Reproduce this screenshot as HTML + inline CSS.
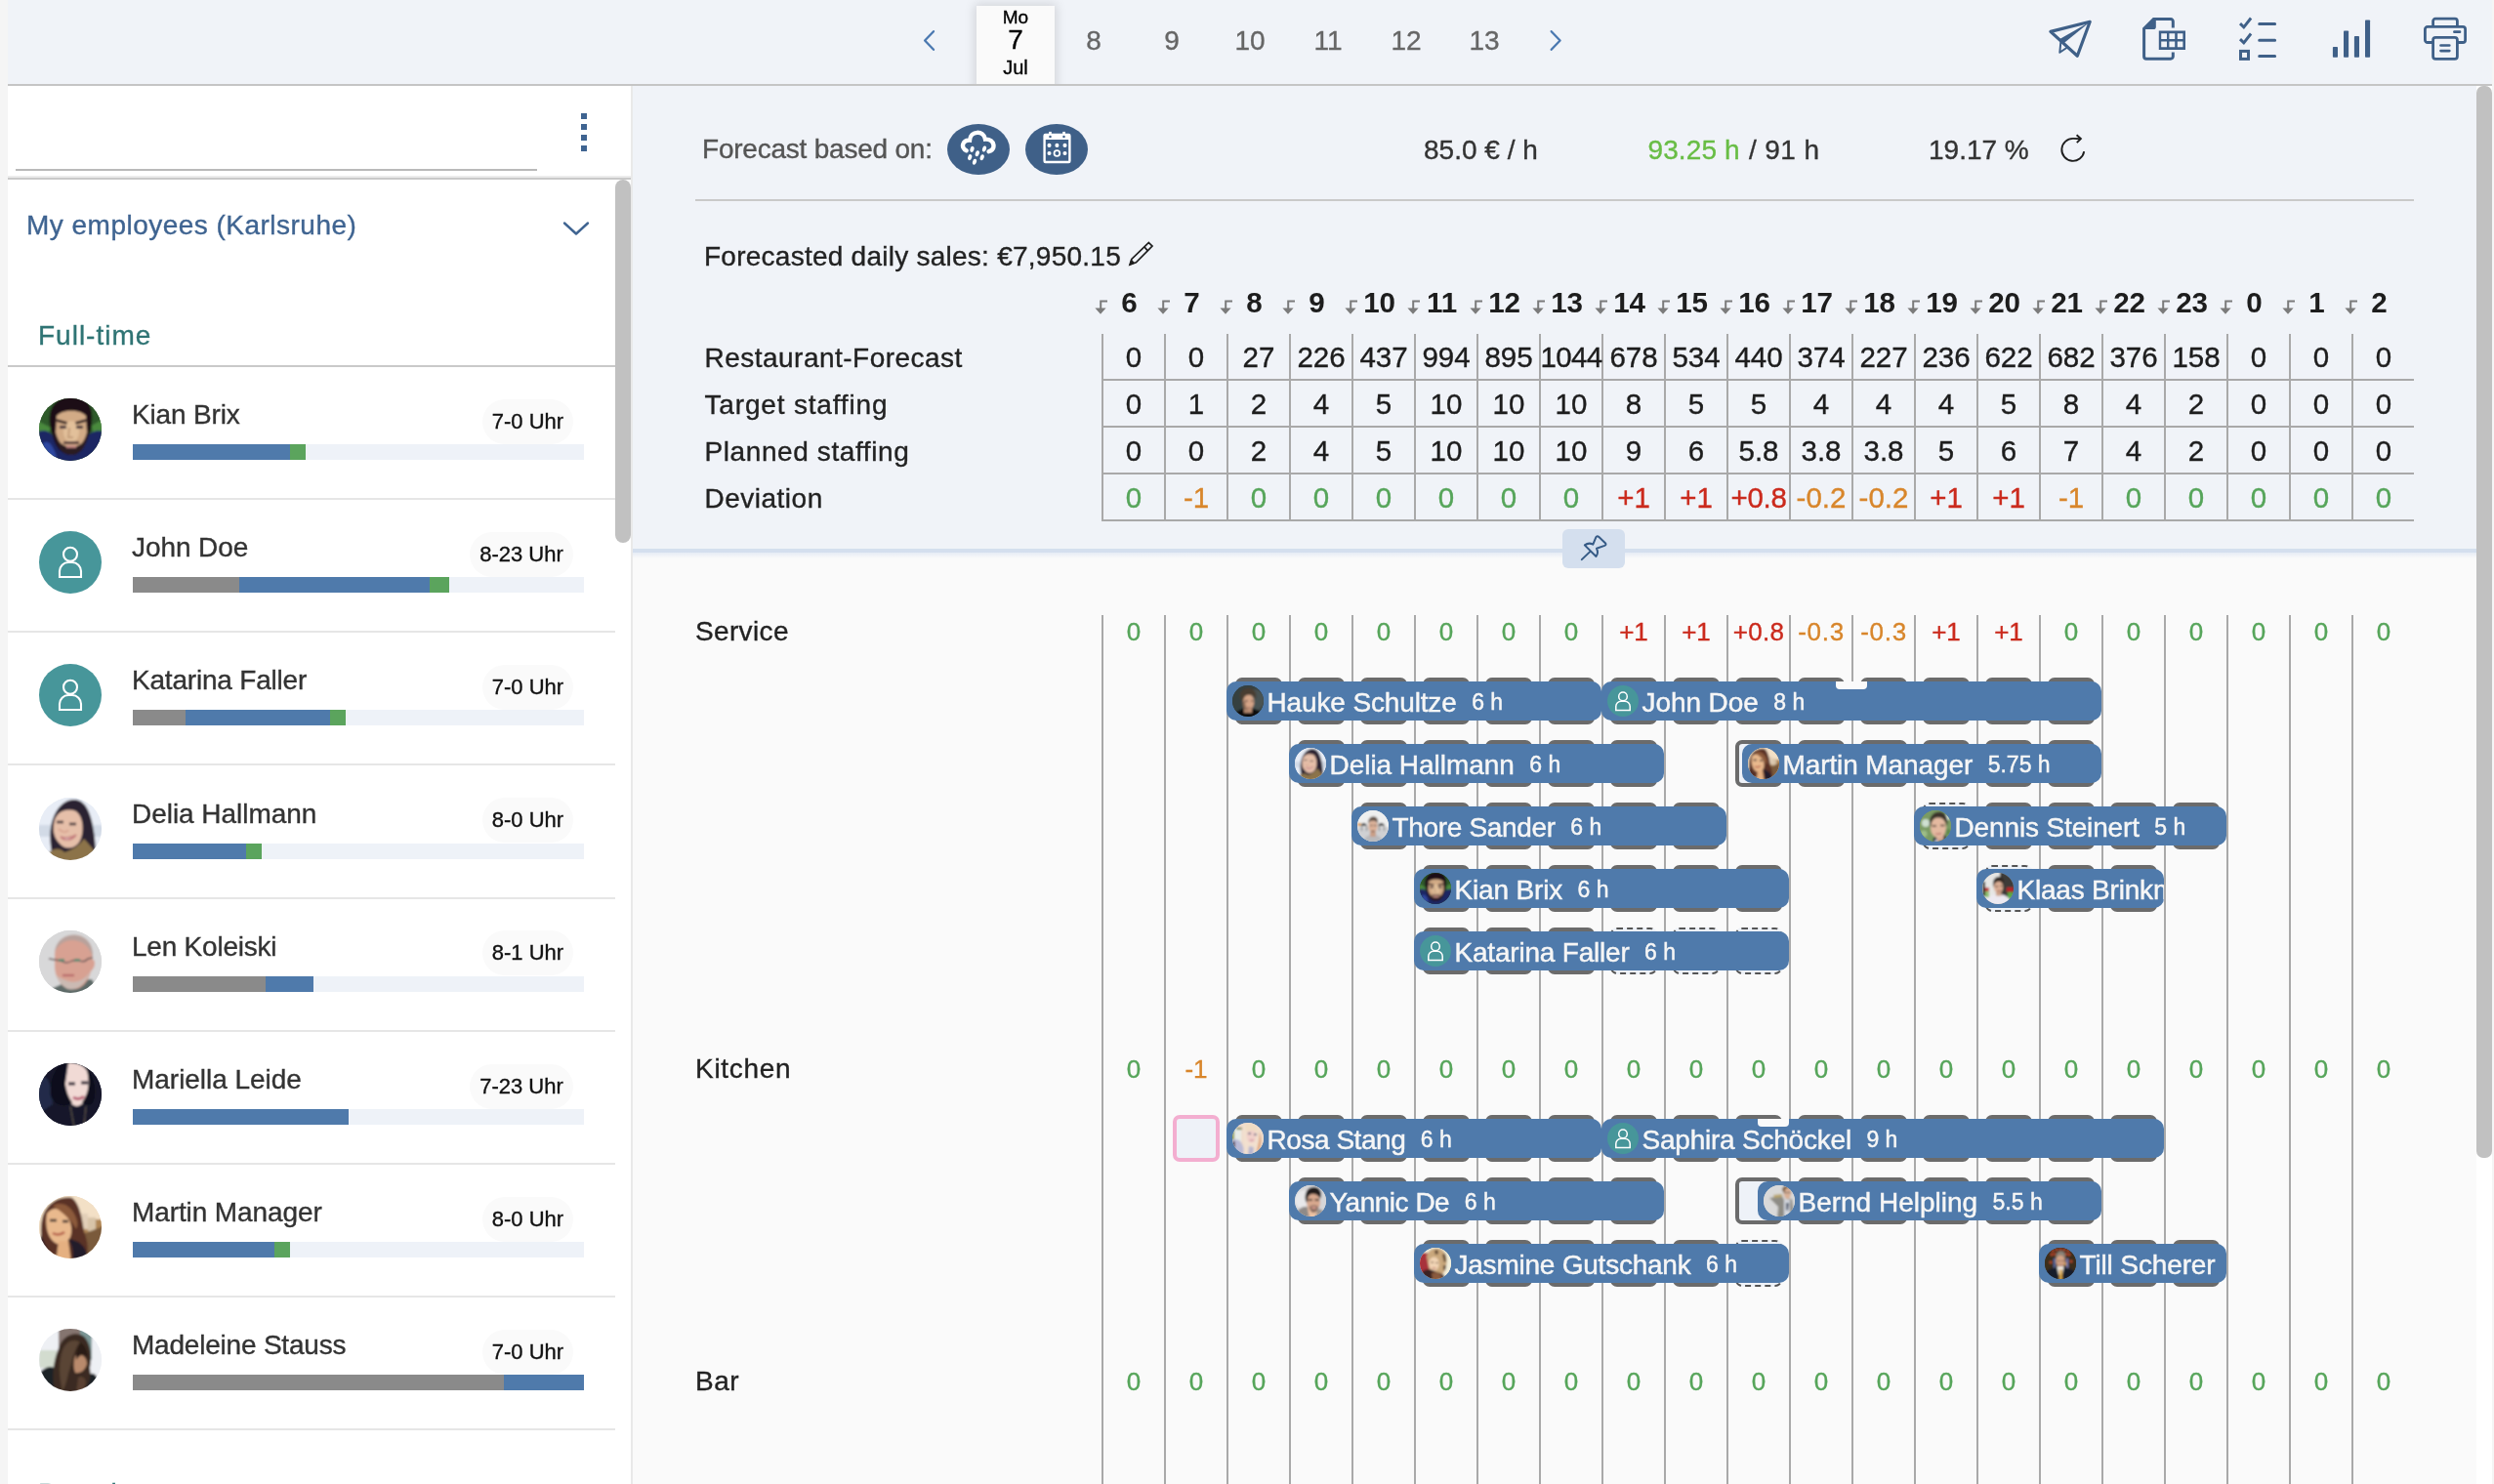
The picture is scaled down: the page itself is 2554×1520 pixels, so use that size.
<!DOCTYPE html><html><head><meta charset="utf-8"><title>Shift planning</title><style>
*{box-sizing:border-box;margin:0;padding:0}
html,body{width:2554px;height:1520px;overflow:hidden;background:#f5f5f5;font-family:"Liberation Sans", sans-serif;}
body{position:relative;-webkit-text-stroke:0.35px}
#wrap{position:absolute;left:0;top:0;width:2554px;height:1520px;will-change:transform}
.abs{position:absolute}
.t{position:absolute;white-space:nowrap;line-height:1}
#top{position:absolute;left:8px;top:0;width:2544px;height:88px;background:#f0f3f8;border-bottom:2px solid #c5c5c5}
#left{position:absolute;left:8px;top:88px;width:640px;height:1432px;background:#fff;border-right:2px solid #e9e9e9;overflow:hidden}
#right{position:absolute;left:648px;top:88px;width:1904px;height:1432px;background:#fafafa;overflow:hidden}
#rhead{position:absolute;left:0;top:0;width:1904px;height:478px;background:#f0f3f8;border-bottom:4px solid #d4dfee}
.day{position:absolute;top:28px;width:80px;text-align:center;font-size:28px;line-height:28px;color:#666}
.sep{position:absolute;left:0;width:622px;height:2px;background:#e6e6e6}
.name{position:absolute;left:127px;font-size:28px;line-height:28px;color:#333;white-space:nowrap}
.badge{position:absolute;height:46px;border-radius:23px;background:#fafafa;font-size:22px;line-height:46px;color:#111;text-align:center;white-space:nowrap}
.pbar{position:absolute;left:128px;width:462px;height:16px;background:#eef2f8;display:flex}
.pbar i{display:block;height:16px}
.av{position:absolute;border-radius:50%;overflow:hidden}
.vl{position:absolute;width:2px;background:#a9a9a9}
.hl{position:absolute;height:2px;background:#a9a9a9}
.cell{position:absolute;width:64px;text-align:center;white-space:nowrap;line-height:1}
.slot{position:absolute;width:47.6px;height:48px;border:4px solid #6b6b6b;border-radius:7px;background:#eef2f8}
.slot.d{border:2px dashed #555;}
.slot.p{border:4px solid #f3aed0;border-radius:7px}
.bar{position:absolute;height:40px;border-radius:10px;background:#4f7aab;overflow:hidden;white-space:nowrap;color:#f6f6f6}
.bar .nm{position:absolute;left:41.5px;top:6.5px;font-size:28px;line-height:30px;-webkit-text-stroke:0.45px}
.bar .nm span{font-size:23px;margin-left:15.5px;letter-spacing:0;position:relative;top:-1.7px}
.notch{position:absolute;width:32px;height:8px;background:#fafafa;border-radius:0 0 4px 4px}
.lbl{position:absolute;left:64px;font-size:28px;line-height:28px;color:#222;white-space:nowrap}
</style></head><body><div id="wrap"><svg width="0" height="0" style="position:absolute"><defs><filter id="bl" x="-20%" y="-20%" width="140%" height="140%"><feGaussianBlur stdDeviation="1.5"/></filter><filter id="bl2" x="-20%" y="-20%" width="140%" height="140%"><feGaussianBlur stdDeviation="0.9"/></filter><filter id="bl3" x="-20%" y="-20%" width="140%" height="140%"><feGaussianBlur stdDeviation="2.2"/></filter></defs></svg>
<div id="top">
<svg class="abs" style="left:934px;top:28px" width="20" height="28" viewBox="0 0 20 28"><path d="M14 4.2 L5.1 13.5 L14 22.8" fill="none" stroke="#4a78b0" stroke-width="2.3" stroke-linecap="round" stroke-linejoin="round"/></svg>
<svg class="abs" style="left:1576px;top:28px" width="20" height="28" viewBox="0 0 20 28"><path d="M4.7 4.2 L13.6 13.5 L4.7 22.8" fill="none" stroke="#4a78b0" stroke-width="2.3" stroke-linecap="round" stroke-linejoin="round"/></svg>
<div class="abs" style="left:940px;top:0;width:184px;height:86px;overflow:hidden"><div class="abs" style="left:52px;top:6px;width:80px;height:90px;background:#fafafa;box-shadow:0 0 10px 2px rgba(0,0,0,.13)"></div></div>
<div class="abs" style="left:992px;top:6px;width:80px;height:80px;background:#fafafa;color:#000;text-align:center"><div class="t" style="left:0;width:80px;top:1.6px;font-size:19px">Mo</div><div class="t" style="left:0;width:80px;top:21px;font-size:28px;line-height:28px">7</div><div class="t" style="left:0;width:80px;top:53px;font-size:20px">Jul</div></div>
<div class="day" style="left:1072px">8</div>
<div class="day" style="left:1152px">9</div>
<div class="day" style="left:1232px">10</div>
<div class="day" style="left:1312px">11</div>
<div class="day" style="left:1392px">12</div>
<div class="day" style="left:1472px">13</div>
<svg class="abs" style="left:2088px;top:18px" width="50" height="46" viewBox="0 0 50 46"><path d="M3.9 14.4 L44.2 4.3 L31.3 39.3 Z" fill="none" stroke="#3f6088" stroke-width="3.2" stroke-linejoin="round"/><path d="M44.5 4.3 L13.3 21.9 L17.8 26 Z" fill="#3f6088"/><path d="M14.3 25.5 L13.3 35.8 L20.3 31" fill="none" stroke="#3f6088" stroke-width="2" stroke-linejoin="round" stroke-linecap="round"/></svg>
<svg class="abs" style="left:2184px;top:16px" width="50" height="48" viewBox="0 0 50 48"><path d="M33.3 12.6 V6 a2.4 2.4 0 0 0 -2.4 -2.4 H13.5 L3.6 13.4 V41.8 a2.4 2.4 0 0 0 2.4 2.4 H30.9 a2.4 2.4 0 0 0 2.4 -2.4 V37.6" fill="none" stroke="#3f6088" stroke-width="3"/><path d="M2.6 13 L13 2.4 H15.8 V11.4 a2.6 2.6 0 0 1 -2.6 2.6 H2.6 Z" fill="#3f6088"/><path d="M18.8 15.5 H46 V35 H18.8 Z M21.2 18.2 V24 H27 V18.2 Z M29.4 18.2 V24 H35.2 V18.2 Z M37.8 18.2 V24 H43.4 V18.2 Z M21.2 26.6 V32.2 H27 V26.6 Z M29.4 26.6 V32.2 H35.2 V26.6 Z M37.8 26.6 V32.2 H43.4 V26.6 Z" fill="#3f6088" fill-rule="evenodd"/></svg>
<svg class="abs" style="left:2282px;top:16px" width="44" height="48" viewBox="0 0 44 48"><path d="M4 8.1 L7.8 11.8 L15.1 2.5 M4 24.1 L7.8 27.8 L15.1 18.5" fill="none" stroke="#3f6088" stroke-width="2.9"/><path d="M23.7 8.5 H39.6 M23.7 25.2 H39.6 M23.7 41.5 H39.6" fill="none" stroke="#3f6088" stroke-width="3" stroke-linecap="round"/><rect x="4.5" y="36.4" width="8" height="8" fill="none" stroke="#3f6088" stroke-width="3"/></svg>
<svg class="abs" style="left:2378px;top:18px" width="44" height="44" viewBox="0 0 44 44"><rect x="2.9" y="30" width="5.1" height="10.8" rx="0.8" fill="#3f6088"/><rect x="14" y="13.5" width="5.1" height="27.3" rx="0.8" fill="#3f6088"/><rect x="24.9" y="19.1" width="5.1" height="21.7" rx="0.8" fill="#3f6088"/><rect x="36" y="2.4" width="5.1" height="38.4" rx="0.8" fill="#3f6088"/></svg>
<svg class="abs" style="left:2472px;top:16px" width="48" height="48" viewBox="0 0 48 48"><path d="M11.6 11 V5.6 a2.4 2.4 0 0 1 2.4 -2.4 H34 a2.4 2.4 0 0 1 2.4 2.4 V11" fill="none" stroke="#3f6088" stroke-width="2.8"/><path d="M11 27.5 H6 a2.6 2.6 0 0 1 -2.6 -2.6 V14 a2.6 2.6 0 0 1 2.6 -2.6 H42 a2.6 2.6 0 0 1 2.6 2.6 V24.9 a2.6 2.6 0 0 1 -2.6 2.6 H37" fill="none" stroke="#3f6088" stroke-width="2.8"/><rect x="11.6" y="22.4" width="24.8" height="22" rx="2.6" fill="none" stroke="#3f6088" stroke-width="2.8"/><path d="M33.4 16.7 H39 M19.5 30.5 H28.3 M19.5 36.1 H28.3" fill="none" stroke="#3f6088" stroke-width="2.7" stroke-linecap="round"/></svg>
</div>
<div id="left">
<div class="abs" style="left:8px;top:85px;width:534px;height:2px;background:#b9b9b9"></div>
<div class="abs" style="left:587px;top:28px;width:6px;height:6px;background:#3f6491"></div>
<div class="abs" style="left:587px;top:39px;width:6px;height:6px;background:#3f6491"></div>
<div class="abs" style="left:587px;top:50px;width:6px;height:6px;background:#3f6491"></div>
<div class="abs" style="left:587px;top:61px;width:6px;height:6px;background:#3f6491"></div>
<div class="abs" style="left:0;top:92px;width:638px;height:2px;background:#ececec"></div>
<div class="abs" style="left:0;top:94px;width:638px;height:2px;background:#c9c9c9"></div>
<div class="abs" style="left:622px;top:96px;width:16px;height:372px;border-radius:8px;background:#c1c1c1"></div>
<div class="t" style="left:19px;top:129px;font-size:28px;line-height:28px;color:#3f6491;letter-spacing:0.48px">My employees (Karlsruhe)</div>
<svg class="abs" style="left:565px;top:136px" width="34" height="20" viewBox="0 0 34 20"><path d="M5 4.5 L17 15.5 L29 4.5" fill="none" stroke="#3f6491" stroke-width="2.4" stroke-linecap="round" stroke-linejoin="round"/></svg>
<div class="t" style="left:31px;top:242px;font-size:28px;line-height:28px;color:#2f7474;letter-spacing:1.0px">Full-time</div>
<div class="sep" style="top:286px;background:#c9c9c9"></div>
<div class="av" style="left:32px;top:320.0px;width:64px;height:64px"><svg viewBox="0 0 64 64" width="100%" height="100%" preserveAspectRatio="none"><rect width="64" height="64" fill="#2c5228"/><g filter="url(#bl2)"><rect x="-4" y="-4" width="72" height="72" fill="#2f5a2b"/><path d="M-4 22 L12 30 L8 40 L-4 38Z M68 20 L54 28 L56 40 L68 36Z" fill="#4a8a3e"/><path d="M-4 36 C6 30 12 34 16 42 L48 42 C52 34 58 32 68 34 V68 H-4Z" fill="#1d2763"/><path d="M4 46 C10 42 14 48 18 60 L6 64Z" fill="#2f47a0"/><path d="M12 32 C6 6 22 -2 33 -2 C48 -2 58 6 53 32 L50 40 C46 52 40 58 33 58 C25 58 18 52 15 42Z" fill="#1b0c15"/><path d="M18 18 C24 11 42 11 48 18 L49 35 C46 46 40 53 33 53 C26 53 20 46 17 35Z" fill="#d2ab86"/><ellipse cx="33" cy="34" rx="8" ry="11" fill="#e2c09a"/><path d="M15 34 C17 51 25 58 33 58 C41 58 49 51 51 34 C47 45 41 50 33 50 C25 50 19 45 15 34Z" fill="#2a1a22"/><path d="M18 22.5 L28.5 25.5 M48 22.5 L37.5 25.5" stroke="#1e0f18" stroke-width="2.8"/><path d="M21 29.5 h7 M38 29.5 h7" stroke="#3a2a38" stroke-width="3.2"/><path d="M31 30 L30 40 h5" stroke="#c29c7a" stroke-width="2" fill="none"/><path d="M25 45.5 H41" stroke="#3a222a" stroke-width="2.4"/><path d="M28 49.5 H38" stroke="#c88a86" stroke-width="2.4"/></g></svg></div>
<div class="name" style="top:323.0px;letter-spacing:-0.17px">Kian Brix</div>
<div class="badge" style="left:486px;top:320.6px;width:93px">7-0 Uhr</div>
<div class="pbar" style="top:367.0px"><i style="width:161px;background:#4f7aab"></i><i style="width:16px;background:#5ba45d"></i></div>
<div class="sep" style="top:422.0px"></div>
<div class="av" style="left:32px;top:456.2px;width:64px;height:64px"><svg viewBox="0 0 64 64" width="100%" height="100%"><rect width="64" height="64" fill="#47969a"/><circle cx="32" cy="23.7" r="7" fill="none" stroke="#fff" stroke-width="2.1"/><path d="M21 47 V41 a9 9 0 0 1 9 -9 h4 a9 9 0 0 1 9 9 V47 Z" fill="none" stroke="#fff" stroke-width="2.1"/></svg></div>
<div class="name" style="top:459.2px;letter-spacing:-0.08px">John Doe</div>
<div class="badge" style="left:473px;top:456.8px;width:106px">8-23 Uhr</div>
<div class="pbar" style="top:503.2px"><i style="width:109px;background:#8a8a8a"></i><i style="width:195px;background:#4f7aab"></i><i style="width:20px;background:#5ba45d"></i></div>
<div class="sep" style="top:558.2px"></div>
<div class="av" style="left:32px;top:592.4px;width:64px;height:64px"><svg viewBox="0 0 64 64" width="100%" height="100%"><rect width="64" height="64" fill="#47969a"/><circle cx="32" cy="23.7" r="7" fill="none" stroke="#fff" stroke-width="2.1"/><path d="M21 47 V41 a9 9 0 0 1 9 -9 h4 a9 9 0 0 1 9 9 V47 Z" fill="none" stroke="#fff" stroke-width="2.1"/></svg></div>
<div class="name" style="top:595.4px;letter-spacing:-0.2px">Katarina Faller</div>
<div class="badge" style="left:486px;top:593.0px;width:93px">7-0 Uhr</div>
<div class="pbar" style="top:639.4px"><i style="width:54px;background:#8a8a8a"></i><i style="width:148px;background:#4f7aab"></i><i style="width:16px;background:#5ba45d"></i></div>
<div class="sep" style="top:694.4px"></div>
<div class="av" style="left:32px;top:728.6px;width:64px;height:64px"><svg viewBox="0 0 64 64" width="100%" height="100%" preserveAspectRatio="none"><rect width="64" height="64" fill="#e9edf5"/><g filter="url(#bl2)"><rect x="-4" y="-4" width="72" height="72" fill="#e8edf6"/><path d="M-4 28 H68 V40 H-4Z" fill="#d2dae6"/><path d="M12 50 C8 20 22 2 36 2 C50 2 56 22 58 54 L50 64 H14Z" fill="#2a2232"/><path d="M15 28 C16 14 28 10 38 14 C46 20 46 36 42 44 C38 52 28 54 22 48 C16 42 14 36 15 28Z" fill="#e6bfa9"/><path d="M8 58 C16 50 22 52 26 56 C34 54 42 48 46 42 L60 58 L54 68 H8Z" fill="#8c7349"/><path d="M22 40 C26 45 34 44 38 38 C34 41 26 42 22 40Z" fill="#fff" stroke="#c47d7d" stroke-width="1.6"/><path d="M18 25 h7 M31 27 h7" stroke="#3a2a30" stroke-width="2.4"/><path d="M20 32 C24 36 28 36 30 33" stroke="#d9a692" stroke-width="2" fill="none"/></g></svg></div>
<div class="name" style="top:731.6px;letter-spacing:-0.04px">Delia Hallmann</div>
<div class="badge" style="left:486px;top:729.2px;width:93px">8-0 Uhr</div>
<div class="pbar" style="top:775.6px"><i style="width:116px;background:#4f7aab"></i><i style="width:16px;background:#5ba45d"></i></div>
<div class="sep" style="top:830.6px"></div>
<div class="av" style="left:32px;top:864.8px;width:64px;height:64px"><svg viewBox="0 0 64 64" width="100%" height="100%" preserveAspectRatio="none"><rect width="64" height="64" fill="#d7d7d8"/><g filter="url(#bl2)"><rect x="-4" y="-4" width="72" height="72" fill="#d8d8d9"/><path d="M12 60 L30 52 L54 50 L64 68 H8Z" fill="#5d6a68"/><path d="M16 26 C16 10 28 4 38 5 C50 6 56 18 55 30 C58 30 58 38 53 42 C50 54 42 62 32 60 C22 58 16 48 16 36Z" fill="#d8a192"/><path d="M16 22 C18 8 30 3 40 5 C50 7 56 16 55 28 C52 16 44 10 34 10 C26 10 20 14 16 22Z" fill="#b8a29c"/><path d="M18 46 C22 58 30 62 36 60 C44 58 50 50 52 42 C46 52 38 54 30 52 C24 50 20 48 18 46Z" fill="#cbbab3"/><path d="M10 29 L22 31 Q28 35 34 31 L40 30 Q46 34 50 29 L55 28" fill="none" stroke="#6a5a5a" stroke-width="1.5"/><path d="M20 30.5 h6 M36 30.5 h6" stroke="#4f8a72" stroke-width="2.6"/><path d="M24 46 h12" stroke="#b8686a" stroke-width="2.2"/></g></svg></div>
<div class="name" style="top:867.8px;letter-spacing:-0.22px">Len Koleiski</div>
<div class="badge" style="left:486px;top:865.4px;width:93px">8-1 Uhr</div>
<div class="pbar" style="top:911.8px"><i style="width:136px;background:#8a8a8a"></i><i style="width:49px;background:#4f7aab"></i></div>
<div class="sep" style="top:966.8px"></div>
<div class="av" style="left:32px;top:1001.0px;width:64px;height:64px"><svg viewBox="0 0 64 64" width="100%" height="100%" preserveAspectRatio="none"><rect width="64" height="64" fill="#15192b"/><g filter="url(#bl2)"><rect x="-4" y="-4" width="72" height="72" fill="#15182a"/><path d="M-4 18 C6 8 12 14 14 42 L-4 54Z" fill="#232c48"/><path d="M30 0 C44 -2 54 8 52 24 C50 38 44 44 38 44 C30 42 26 32 27 20Z" fill="#f1dad5"/><path d="M29 -2 C24 8 26 30 34 40 C28 46 16 44 12 34 C10 16 18 0 29 -2Z" fill="#0f101a"/><path d="M48 4 C58 14 60 34 54 42 C50 44 46 42 44 40 C52 30 52 16 48 4Z" fill="#0f101a"/><path d="M30 21 h7 M43 20 h7" stroke="#2a2230" stroke-width="2.8"/><path d="M35 35 Q41 38.5 46 34" stroke="#b85e74" stroke-width="3" fill="none"/><path d="M32 44 L36 66 M48 44 L46 64" stroke="#5a5248" stroke-width="1.2"/></g></svg></div>
<div class="name" style="top:1004.0px;letter-spacing:-0.03px">Mariella Leide</div>
<div class="badge" style="left:473px;top:1001.6px;width:106px">7-23 Uhr</div>
<div class="pbar" style="top:1048.0px"><i style="width:221px;background:#4f7aab"></i></div>
<div class="sep" style="top:1103.0px"></div>
<div class="av" style="left:32px;top:1137.2px;width:64px;height:64px"><svg viewBox="0 0 64 64" width="100%" height="100%" preserveAspectRatio="none"><rect width="64" height="64" fill="#efd9bc"/><g filter="url(#bl2)"><rect x="-4" y="-4" width="72" height="72" fill="#f3e0c6"/><rect x="38" y="24" width="30" height="44" fill="#b08655"/><rect x="40" y="18" width="10" height="16" fill="#e2cfb8"/><rect x="50" y="22" width="8" height="14" fill="#d8c4a8"/><path d="M42 40 L68 30 V68 H50Z" fill="#7a5a3a"/><path d="M4 20 C10 4 24 0 34 2 C42 8 44 24 46 36 C50 48 52 56 46 68 H8 C2 50 0 34 4 20Z" fill="#5a3326"/><path d="M8 18 C14 10 22 12 28 20 C34 28 34 36 32 42 C28 50 20 52 14 46 C8 40 6 28 8 18Z" fill="#e9b98d"/><path d="M20 46 L30 46 L33 68 H17Z" fill="#e5b081"/><path d="M14 10 C22 6 30 8 36 18 C40 26 40 30 38 34 C34 26 26 18 14 10Z" fill="#8c5a3a"/><path d="M2 40 C6 52 12 60 20 68 H4 C2 56 0 48 2 40Z" fill="#20182a"/><path d="M30 44 C34 50 36 58 34 68 H50 C50 54 44 46 30 44Z" fill="#241a2c"/><path d="M11 25 h7 M24 26 h6" stroke="#3a2a2a" stroke-width="2.6"/><path d="M14 38 Q20 41.5 26 37" stroke="#b5604a" stroke-width="2.6" fill="none"/></g></svg></div>
<div class="name" style="top:1140.2px;letter-spacing:-0.1px">Martin Manager</div>
<div class="badge" style="left:486px;top:1137.8px;width:93px">8-0 Uhr</div>
<div class="pbar" style="top:1184.2px"><i style="width:145px;background:#4f7aab"></i><i style="width:16px;background:#5ba45d"></i></div>
<div class="sep" style="top:1239.2px"></div>
<div class="av" style="left:32px;top:1273.4px;width:64px;height:64px"><svg viewBox="0 0 64 64" width="100%" height="100%" preserveAspectRatio="none"><rect width="64" height="64" fill="#eef0f3"/><g filter="url(#bl2)"><rect x="-4" y="-4" width="72" height="72" fill="#eef0f4"/><path d="M0 22 h18 v18 h-18Z" fill="#d3dccf"/><rect x="20" y="-4" width="32" height="44" fill="#85756f"/><rect x="42" y="0" width="12" height="32" fill="#7c9796"/><path d="M0 46 C8 36 16 38 20 44 L56 46 C62 50 62 58 56 68 H4Z" fill="#1c2428"/><path d="M20 20 C24 6 38 2 46 8 C54 16 54 30 52 40 C54 52 50 60 42 68 H18 C12 56 14 34 20 20Z" fill="#3a2a20"/><path d="M37 28 C42 24 49 28 49 36 C47 43 42 46 37 45 C35 40 35 33 37 28Z" fill="#b98a6c"/><path d="M24 22 C28 12 36 10 42 14 C36 20 34 34 30 46 C28 56 26 60 24 64 C20 48 20 34 24 22Z" fill="#5a4434"/><path d="M42 14 C48 18 50 24 50 30 C46 24 42 26 38 32 C38 24 40 18 42 14Z" fill="#2a1c16"/><path d="M40 50 C44 48 48 50 48 56 L44 66 H38Z" fill="#5a4030"/></g></svg></div>
<div class="name" style="top:1276.4px;letter-spacing:-0.21px">Madeleine Stauss</div>
<div class="badge" style="left:486px;top:1274.0px;width:93px">7-0 Uhr</div>
<div class="pbar" style="top:1320.4px"><i style="width:380px;background:#8a8a8a"></i><i style="width:82px;background:#4f7aab"></i></div>
<div class="sep" style="top:1375.4px"></div>
<div class="t" style="left:31px;top:1427.5px;font-size:28px;line-height:28px;color:#2f7474;letter-spacing:1.0px">Part-time</div>
</div>
<div id="right">
<div id="rhead"></div>
<div class="abs" style="left:0;top:478px;width:1904px;height:6px;background:linear-gradient(#e6ecf5,#fafafa)"></div>
<div class="abs" style="left:1888px;top:0;width:16px;height:1432px;background:#fff"></div>
<div class="abs" style="left:1888px;top:0;width:16px;height:1098px;border-radius:7px;background:#c1c1c1"></div>
<div class="t" style="left:71px;top:51px;font-size:28px;line-height:28px;color:#555;letter-spacing:-0.22px">Forecast based on:</div>
<svg class="abs" style="left:322px;top:39px" width="64" height="52" viewBox="0 0 64 52"><ellipse cx="32" cy="26" rx="32" ry="26" fill="#3f6088"/><path d="M19.6 27.3 C13.5 24.5 15.5 16.2 23 16.6 C23.8 6.6 37.2 6.2 39 15.6 C48.5 15 50.5 26.5 42.6 28.2" fill="none" stroke="#fff" stroke-width="4.4" stroke-linecap="round"/><ellipse cx="25.5" cy="25.9" rx="1.95" ry="3.1" fill="#fff" transform="rotate(17 25.5 25.9)"/><ellipse cx="38" cy="25.5" rx="1.95" ry="3.1" fill="#fff" transform="rotate(17 38 25.5)"/><ellipse cx="30.8" cy="30.2" rx="1.95" ry="3.1" fill="#fff" transform="rotate(17 30.8 30.2)"/><ellipse cx="23.2" cy="34.1" rx="1.95" ry="3.1" fill="#fff" transform="rotate(17 23.2 34.1)"/><ellipse cx="35.7" cy="34.3" rx="1.95" ry="3.1" fill="#fff" transform="rotate(17 35.7 34.3)"/><ellipse cx="28" cy="38.7" rx="1.95" ry="3.1" fill="#fff" transform="rotate(17 28 38.7)"/></svg>
<svg class="abs" style="left:402px;top:39px" width="64" height="52" viewBox="0 0 64 52"><ellipse cx="32" cy="26" rx="32" ry="26" fill="#3f6088"/><path d="M18.4 12 a2.2 2.2 0 0 1 2.2 -2.2 H44.4 a2.2 2.2 0 0 1 2.2 2.2 V38 a2.2 2.2 0 0 1 -2.2 2.2 H20.6 a2.2 2.2 0 0 1 -2.2 -2.2 Z M20.8 16.1 V37.7 H44.2 V16.1 Z" fill="#fff" fill-rule="evenodd"/><rect x="24.1" y="7.9" width="2.7" height="3" fill="#fff"/><rect x="38.2" y="7.9" width="2.7" height="3" fill="#fff"/><circle cx="25.5" cy="12.9" r="1.25" fill="#3f6088"/><circle cx="39.5" cy="12.9" r="1.25" fill="#3f6088"/><circle cx="24.5" cy="21.9" r="2.05" fill="#fff"/><circle cx="32.4" cy="21.9" r="2.05" fill="#fff"/><circle cx="40.5" cy="21.9" r="2.05" fill="#fff"/><circle cx="24.5" cy="30" r="2.05" fill="#fff"/><circle cx="40.5" cy="30" r="2.05" fill="#fff"/><circle cx="32.4" cy="30" r="2.9" fill="none" stroke="#fff" stroke-width="1.8"/></svg>
<div class="t" style="left:810px;top:52px;font-size:28px;line-height:28px;color:#333">85.0 € / h</div>
<div class="t" style="left:1039.5px;top:52px;font-size:28px;line-height:28px;color:#68bd45;letter-spacing:0.1px">93.25 h</div>
<div class="t" style="left:1143px;top:52px;font-size:28px;line-height:28px;color:#333;letter-spacing:0.4px">/ 91 h</div>
<div class="t" style="left:1327px;top:52px;font-size:28px;line-height:28px;color:#333">19.17 %</div>
<svg class="abs" style="left:1458px;top:46px" width="34" height="36" viewBox="0 0 34 36"><path d="M24.6 8.2 L17.2 7.9 A11.5 11.5 0 1 0 28.2 21.2" fill="none" stroke="#1e1e1e" stroke-width="1.9"/><path d="M20.6 4.3 L24.9 8.1 L20.8 12.2" fill="none" stroke="#1e1e1e" stroke-width="1.9"/></svg>
<div class="abs" style="left:64px;top:116px;width:1760px;height:2px;background:#c9c9c9"></div>
<div class="t" style="left:73px;top:161px;font-size:28px;line-height:28px;color:#222;letter-spacing:0.25px">Forecasted daily sales: €7,950.15</div>
<svg class="abs" style="left:506px;top:157px" width="30" height="30" viewBox="0 0 30 30"><path d="M22.4 3.5 L26 7.1 L9.4 23.8 L3 26.2 L4.8 20.4 Z" fill="none" stroke="#1e1e1e" stroke-width="1.7" stroke-linejoin="miter"/><path d="M17.8 7.8 L21.4 11.9" fill="none" stroke="#1e1e1e" stroke-width="1.7"/><path d="M2.4 26.9 L4.4 20.6 L8.4 24.6 Z" fill="#1e1e1e"/></svg>
<svg class="abs" style="left:473px;top:218px" width="14" height="16" viewBox="0 0 14 16"><path d="M5.2 2.6 H13 M6.2 1.6 V10" fill="none" stroke="#7b7b7b" stroke-width="2"/><path d="M0.4 9.4 H11.6 L6 15.8 Z" fill="#7b7b7b"/></svg>
<div class="cell" style="left:476.6px;top:207px;font-size:29.6px;-webkit-text-stroke:0;font-weight:bold;color:#1d1d1d">6</div>
<svg class="abs" style="left:537px;top:218px" width="14" height="16" viewBox="0 0 14 16"><path d="M5.2 2.6 H13 M6.2 1.6 V10" fill="none" stroke="#7b7b7b" stroke-width="2"/><path d="M0.4 9.4 H11.6 L6 15.8 Z" fill="#7b7b7b"/></svg>
<div class="cell" style="left:540.6px;top:207px;font-size:29.6px;-webkit-text-stroke:0;font-weight:bold;color:#1d1d1d">7</div>
<svg class="abs" style="left:601px;top:218px" width="14" height="16" viewBox="0 0 14 16"><path d="M5.2 2.6 H13 M6.2 1.6 V10" fill="none" stroke="#7b7b7b" stroke-width="2"/><path d="M0.4 9.4 H11.6 L6 15.8 Z" fill="#7b7b7b"/></svg>
<div class="cell" style="left:604.6px;top:207px;font-size:29.6px;-webkit-text-stroke:0;font-weight:bold;color:#1d1d1d">8</div>
<svg class="abs" style="left:665px;top:218px" width="14" height="16" viewBox="0 0 14 16"><path d="M5.2 2.6 H13 M6.2 1.6 V10" fill="none" stroke="#7b7b7b" stroke-width="2"/><path d="M0.4 9.4 H11.6 L6 15.8 Z" fill="#7b7b7b"/></svg>
<div class="cell" style="left:668.6px;top:207px;font-size:29.6px;-webkit-text-stroke:0;font-weight:bold;color:#1d1d1d">9</div>
<svg class="abs" style="left:729px;top:218px" width="14" height="16" viewBox="0 0 14 16"><path d="M5.2 2.6 H13 M6.2 1.6 V10" fill="none" stroke="#7b7b7b" stroke-width="2"/><path d="M0.4 9.4 H11.6 L6 15.8 Z" fill="#7b7b7b"/></svg>
<div class="cell" style="left:732.6px;top:207px;font-size:29.6px;-webkit-text-stroke:0;font-weight:bold;color:#1d1d1d">10</div>
<svg class="abs" style="left:793px;top:218px" width="14" height="16" viewBox="0 0 14 16"><path d="M5.2 2.6 H13 M6.2 1.6 V10" fill="none" stroke="#7b7b7b" stroke-width="2"/><path d="M0.4 9.4 H11.6 L6 15.8 Z" fill="#7b7b7b"/></svg>
<div class="cell" style="left:796.6px;top:207px;font-size:29.6px;-webkit-text-stroke:0;font-weight:bold;color:#1d1d1d">11</div>
<svg class="abs" style="left:857px;top:218px" width="14" height="16" viewBox="0 0 14 16"><path d="M5.2 2.6 H13 M6.2 1.6 V10" fill="none" stroke="#7b7b7b" stroke-width="2"/><path d="M0.4 9.4 H11.6 L6 15.8 Z" fill="#7b7b7b"/></svg>
<div class="cell" style="left:860.6px;top:207px;font-size:29.6px;-webkit-text-stroke:0;font-weight:bold;color:#1d1d1d">12</div>
<svg class="abs" style="left:921px;top:218px" width="14" height="16" viewBox="0 0 14 16"><path d="M5.2 2.6 H13 M6.2 1.6 V10" fill="none" stroke="#7b7b7b" stroke-width="2"/><path d="M0.4 9.4 H11.6 L6 15.8 Z" fill="#7b7b7b"/></svg>
<div class="cell" style="left:924.6px;top:207px;font-size:29.6px;-webkit-text-stroke:0;font-weight:bold;color:#1d1d1d">13</div>
<svg class="abs" style="left:985px;top:218px" width="14" height="16" viewBox="0 0 14 16"><path d="M5.2 2.6 H13 M6.2 1.6 V10" fill="none" stroke="#7b7b7b" stroke-width="2"/><path d="M0.4 9.4 H11.6 L6 15.8 Z" fill="#7b7b7b"/></svg>
<div class="cell" style="left:988.6px;top:207px;font-size:29.6px;-webkit-text-stroke:0;font-weight:bold;color:#1d1d1d">14</div>
<svg class="abs" style="left:1049px;top:218px" width="14" height="16" viewBox="0 0 14 16"><path d="M5.2 2.6 H13 M6.2 1.6 V10" fill="none" stroke="#7b7b7b" stroke-width="2"/><path d="M0.4 9.4 H11.6 L6 15.8 Z" fill="#7b7b7b"/></svg>
<div class="cell" style="left:1052.6px;top:207px;font-size:29.6px;-webkit-text-stroke:0;font-weight:bold;color:#1d1d1d">15</div>
<svg class="abs" style="left:1113px;top:218px" width="14" height="16" viewBox="0 0 14 16"><path d="M5.2 2.6 H13 M6.2 1.6 V10" fill="none" stroke="#7b7b7b" stroke-width="2"/><path d="M0.4 9.4 H11.6 L6 15.8 Z" fill="#7b7b7b"/></svg>
<div class="cell" style="left:1116.6px;top:207px;font-size:29.6px;-webkit-text-stroke:0;font-weight:bold;color:#1d1d1d">16</div>
<svg class="abs" style="left:1177px;top:218px" width="14" height="16" viewBox="0 0 14 16"><path d="M5.2 2.6 H13 M6.2 1.6 V10" fill="none" stroke="#7b7b7b" stroke-width="2"/><path d="M0.4 9.4 H11.6 L6 15.8 Z" fill="#7b7b7b"/></svg>
<div class="cell" style="left:1180.6px;top:207px;font-size:29.6px;-webkit-text-stroke:0;font-weight:bold;color:#1d1d1d">17</div>
<svg class="abs" style="left:1241px;top:218px" width="14" height="16" viewBox="0 0 14 16"><path d="M5.2 2.6 H13 M6.2 1.6 V10" fill="none" stroke="#7b7b7b" stroke-width="2"/><path d="M0.4 9.4 H11.6 L6 15.8 Z" fill="#7b7b7b"/></svg>
<div class="cell" style="left:1244.6px;top:207px;font-size:29.6px;-webkit-text-stroke:0;font-weight:bold;color:#1d1d1d">18</div>
<svg class="abs" style="left:1305px;top:218px" width="14" height="16" viewBox="0 0 14 16"><path d="M5.2 2.6 H13 M6.2 1.6 V10" fill="none" stroke="#7b7b7b" stroke-width="2"/><path d="M0.4 9.4 H11.6 L6 15.8 Z" fill="#7b7b7b"/></svg>
<div class="cell" style="left:1308.6px;top:207px;font-size:29.6px;-webkit-text-stroke:0;font-weight:bold;color:#1d1d1d">19</div>
<svg class="abs" style="left:1369px;top:218px" width="14" height="16" viewBox="0 0 14 16"><path d="M5.2 2.6 H13 M6.2 1.6 V10" fill="none" stroke="#7b7b7b" stroke-width="2"/><path d="M0.4 9.4 H11.6 L6 15.8 Z" fill="#7b7b7b"/></svg>
<div class="cell" style="left:1372.6px;top:207px;font-size:29.6px;-webkit-text-stroke:0;font-weight:bold;color:#1d1d1d">20</div>
<svg class="abs" style="left:1433px;top:218px" width="14" height="16" viewBox="0 0 14 16"><path d="M5.2 2.6 H13 M6.2 1.6 V10" fill="none" stroke="#7b7b7b" stroke-width="2"/><path d="M0.4 9.4 H11.6 L6 15.8 Z" fill="#7b7b7b"/></svg>
<div class="cell" style="left:1436.6px;top:207px;font-size:29.6px;-webkit-text-stroke:0;font-weight:bold;color:#1d1d1d">21</div>
<svg class="abs" style="left:1497px;top:218px" width="14" height="16" viewBox="0 0 14 16"><path d="M5.2 2.6 H13 M6.2 1.6 V10" fill="none" stroke="#7b7b7b" stroke-width="2"/><path d="M0.4 9.4 H11.6 L6 15.8 Z" fill="#7b7b7b"/></svg>
<div class="cell" style="left:1500.6px;top:207px;font-size:29.6px;-webkit-text-stroke:0;font-weight:bold;color:#1d1d1d">22</div>
<svg class="abs" style="left:1561px;top:218px" width="14" height="16" viewBox="0 0 14 16"><path d="M5.2 2.6 H13 M6.2 1.6 V10" fill="none" stroke="#7b7b7b" stroke-width="2"/><path d="M0.4 9.4 H11.6 L6 15.8 Z" fill="#7b7b7b"/></svg>
<div class="cell" style="left:1564.6px;top:207px;font-size:29.6px;-webkit-text-stroke:0;font-weight:bold;color:#1d1d1d">23</div>
<svg class="abs" style="left:1625px;top:218px" width="14" height="16" viewBox="0 0 14 16"><path d="M5.2 2.6 H13 M6.2 1.6 V10" fill="none" stroke="#7b7b7b" stroke-width="2"/><path d="M0.4 9.4 H11.6 L6 15.8 Z" fill="#7b7b7b"/></svg>
<div class="cell" style="left:1628.6px;top:207px;font-size:29.6px;-webkit-text-stroke:0;font-weight:bold;color:#1d1d1d">0</div>
<svg class="abs" style="left:1689px;top:218px" width="14" height="16" viewBox="0 0 14 16"><path d="M5.2 2.6 H13 M6.2 1.6 V10" fill="none" stroke="#7b7b7b" stroke-width="2"/><path d="M0.4 9.4 H11.6 L6 15.8 Z" fill="#7b7b7b"/></svg>
<div class="cell" style="left:1692.6px;top:207px;font-size:29.6px;-webkit-text-stroke:0;font-weight:bold;color:#1d1d1d">1</div>
<svg class="abs" style="left:1753px;top:218px" width="14" height="16" viewBox="0 0 14 16"><path d="M5.2 2.6 H13 M6.2 1.6 V10" fill="none" stroke="#7b7b7b" stroke-width="2"/><path d="M0.4 9.4 H11.6 L6 15.8 Z" fill="#7b7b7b"/></svg>
<div class="cell" style="left:1756.6px;top:207px;font-size:29.6px;-webkit-text-stroke:0;font-weight:bold;color:#1d1d1d">2</div>
<div class="vl" style="left:480px;top:254px;height:192px"></div>
<div class="vl" style="left:544px;top:254px;height:192px"></div>
<div class="vl" style="left:608px;top:254px;height:192px"></div>
<div class="vl" style="left:672px;top:254px;height:192px"></div>
<div class="vl" style="left:736px;top:254px;height:192px"></div>
<div class="vl" style="left:800px;top:254px;height:192px"></div>
<div class="vl" style="left:864px;top:254px;height:192px"></div>
<div class="vl" style="left:928px;top:254px;height:192px"></div>
<div class="vl" style="left:992px;top:254px;height:192px"></div>
<div class="vl" style="left:1056px;top:254px;height:192px"></div>
<div class="vl" style="left:1120px;top:254px;height:192px"></div>
<div class="vl" style="left:1184px;top:254px;height:192px"></div>
<div class="vl" style="left:1248px;top:254px;height:192px"></div>
<div class="vl" style="left:1312px;top:254px;height:192px"></div>
<div class="vl" style="left:1376px;top:254px;height:192px"></div>
<div class="vl" style="left:1440px;top:254px;height:192px"></div>
<div class="vl" style="left:1504px;top:254px;height:192px"></div>
<div class="vl" style="left:1568px;top:254px;height:192px"></div>
<div class="vl" style="left:1632px;top:254px;height:192px"></div>
<div class="vl" style="left:1696px;top:254px;height:192px"></div>
<div class="vl" style="left:1760px;top:254px;height:192px"></div>
<div class="hl" style="left:480px;top:300px;width:1344px"></div>
<div class="hl" style="left:480px;top:348px;width:1344px"></div>
<div class="hl" style="left:480px;top:396px;width:1344px"></div>
<div class="hl" style="left:480px;top:444px;width:1344px"></div>
<div class="t" style="left:73.5px;top:265px;font-size:28px;line-height:28px;color:#222;letter-spacing:0.48px">Restaurant-Forecast</div>
<div class="cell" style="left:481px;top:263.3px;font-size:29.5px;color:#1d1d1d">0</div>
<div class="cell" style="left:545px;top:263.3px;font-size:29.5px;color:#1d1d1d">0</div>
<div class="cell" style="left:609px;top:263.3px;font-size:29.5px;color:#1d1d1d">27</div>
<div class="cell" style="left:673px;top:263.3px;font-size:29.5px;color:#1d1d1d">226</div>
<div class="cell" style="left:737px;top:263.3px;font-size:29.5px;color:#1d1d1d">437</div>
<div class="cell" style="left:801px;top:263.3px;font-size:29.5px;color:#1d1d1d">994</div>
<div class="cell" style="left:865px;top:263.3px;font-size:29.5px;color:#1d1d1d">895</div>
<div class="cell" style="left:929px;top:263.3px;font-size:29.5px;letter-spacing:-0.6px;color:#1d1d1d">1044</div>
<div class="cell" style="left:993px;top:263.3px;font-size:29.5px;color:#1d1d1d">678</div>
<div class="cell" style="left:1057px;top:263.3px;font-size:29.5px;color:#1d1d1d">534</div>
<div class="cell" style="left:1121px;top:263.3px;font-size:29.5px;color:#1d1d1d">440</div>
<div class="cell" style="left:1185px;top:263.3px;font-size:29.5px;color:#1d1d1d">374</div>
<div class="cell" style="left:1249px;top:263.3px;font-size:29.5px;color:#1d1d1d">227</div>
<div class="cell" style="left:1313px;top:263.3px;font-size:29.5px;color:#1d1d1d">236</div>
<div class="cell" style="left:1377px;top:263.3px;font-size:29.5px;color:#1d1d1d">622</div>
<div class="cell" style="left:1441px;top:263.3px;font-size:29.5px;color:#1d1d1d">682</div>
<div class="cell" style="left:1505px;top:263.3px;font-size:29.5px;color:#1d1d1d">376</div>
<div class="cell" style="left:1569px;top:263.3px;font-size:29.5px;color:#1d1d1d">158</div>
<div class="cell" style="left:1633px;top:263.3px;font-size:29.5px;color:#1d1d1d">0</div>
<div class="cell" style="left:1697px;top:263.3px;font-size:29.5px;color:#1d1d1d">0</div>
<div class="cell" style="left:1761px;top:263.3px;font-size:29.5px;color:#1d1d1d">0</div>
<div class="t" style="left:73.5px;top:313px;font-size:28px;line-height:28px;color:#222;letter-spacing:0.83px">Target staffing</div>
<div class="cell" style="left:481px;top:311.3px;font-size:29.5px;color:#1d1d1d">0</div>
<div class="cell" style="left:545px;top:311.3px;font-size:29.5px;color:#1d1d1d">1</div>
<div class="cell" style="left:609px;top:311.3px;font-size:29.5px;color:#1d1d1d">2</div>
<div class="cell" style="left:673px;top:311.3px;font-size:29.5px;color:#1d1d1d">4</div>
<div class="cell" style="left:737px;top:311.3px;font-size:29.5px;color:#1d1d1d">5</div>
<div class="cell" style="left:801px;top:311.3px;font-size:29.5px;color:#1d1d1d">10</div>
<div class="cell" style="left:865px;top:311.3px;font-size:29.5px;color:#1d1d1d">10</div>
<div class="cell" style="left:929px;top:311.3px;font-size:29.5px;color:#1d1d1d">10</div>
<div class="cell" style="left:993px;top:311.3px;font-size:29.5px;color:#1d1d1d">8</div>
<div class="cell" style="left:1057px;top:311.3px;font-size:29.5px;color:#1d1d1d">5</div>
<div class="cell" style="left:1121px;top:311.3px;font-size:29.5px;color:#1d1d1d">5</div>
<div class="cell" style="left:1185px;top:311.3px;font-size:29.5px;color:#1d1d1d">4</div>
<div class="cell" style="left:1249px;top:311.3px;font-size:29.5px;color:#1d1d1d">4</div>
<div class="cell" style="left:1313px;top:311.3px;font-size:29.5px;color:#1d1d1d">4</div>
<div class="cell" style="left:1377px;top:311.3px;font-size:29.5px;color:#1d1d1d">5</div>
<div class="cell" style="left:1441px;top:311.3px;font-size:29.5px;color:#1d1d1d">8</div>
<div class="cell" style="left:1505px;top:311.3px;font-size:29.5px;color:#1d1d1d">4</div>
<div class="cell" style="left:1569px;top:311.3px;font-size:29.5px;color:#1d1d1d">2</div>
<div class="cell" style="left:1633px;top:311.3px;font-size:29.5px;color:#1d1d1d">0</div>
<div class="cell" style="left:1697px;top:311.3px;font-size:29.5px;color:#1d1d1d">0</div>
<div class="cell" style="left:1761px;top:311.3px;font-size:29.5px;color:#1d1d1d">0</div>
<div class="t" style="left:73.5px;top:361px;font-size:28px;line-height:28px;color:#222;letter-spacing:0.6px">Planned staffing</div>
<div class="cell" style="left:481px;top:359.3px;font-size:29.5px;color:#1d1d1d">0</div>
<div class="cell" style="left:545px;top:359.3px;font-size:29.5px;color:#1d1d1d">0</div>
<div class="cell" style="left:609px;top:359.3px;font-size:29.5px;color:#1d1d1d">2</div>
<div class="cell" style="left:673px;top:359.3px;font-size:29.5px;color:#1d1d1d">4</div>
<div class="cell" style="left:737px;top:359.3px;font-size:29.5px;color:#1d1d1d">5</div>
<div class="cell" style="left:801px;top:359.3px;font-size:29.5px;color:#1d1d1d">10</div>
<div class="cell" style="left:865px;top:359.3px;font-size:29.5px;color:#1d1d1d">10</div>
<div class="cell" style="left:929px;top:359.3px;font-size:29.5px;color:#1d1d1d">10</div>
<div class="cell" style="left:993px;top:359.3px;font-size:29.5px;color:#1d1d1d">9</div>
<div class="cell" style="left:1057px;top:359.3px;font-size:29.5px;color:#1d1d1d">6</div>
<div class="cell" style="left:1121px;top:359.3px;font-size:29.5px;color:#1d1d1d">5.8</div>
<div class="cell" style="left:1185px;top:359.3px;font-size:29.5px;color:#1d1d1d">3.8</div>
<div class="cell" style="left:1249px;top:359.3px;font-size:29.5px;color:#1d1d1d">3.8</div>
<div class="cell" style="left:1313px;top:359.3px;font-size:29.5px;color:#1d1d1d">5</div>
<div class="cell" style="left:1377px;top:359.3px;font-size:29.5px;color:#1d1d1d">6</div>
<div class="cell" style="left:1441px;top:359.3px;font-size:29.5px;color:#1d1d1d">7</div>
<div class="cell" style="left:1505px;top:359.3px;font-size:29.5px;color:#1d1d1d">4</div>
<div class="cell" style="left:1569px;top:359.3px;font-size:29.5px;color:#1d1d1d">2</div>
<div class="cell" style="left:1633px;top:359.3px;font-size:29.5px;color:#1d1d1d">0</div>
<div class="cell" style="left:1697px;top:359.3px;font-size:29.5px;color:#1d1d1d">0</div>
<div class="cell" style="left:1761px;top:359.3px;font-size:29.5px;color:#1d1d1d">0</div>
<div class="t" style="left:73.5px;top:409px;font-size:28px;line-height:28px;color:#222;letter-spacing:0.5px">Deviation</div>
<div class="cell" style="left:481px;top:407.3px;font-size:29.5px;color:#56a55a">0</div>
<div class="cell" style="left:545px;top:407.3px;font-size:29.5px;color:#d8862b">-1</div>
<div class="cell" style="left:609px;top:407.3px;font-size:29.5px;color:#56a55a">0</div>
<div class="cell" style="left:673px;top:407.3px;font-size:29.5px;color:#56a55a">0</div>
<div class="cell" style="left:737px;top:407.3px;font-size:29.5px;color:#56a55a">0</div>
<div class="cell" style="left:801px;top:407.3px;font-size:29.5px;color:#56a55a">0</div>
<div class="cell" style="left:865px;top:407.3px;font-size:29.5px;color:#56a55a">0</div>
<div class="cell" style="left:929px;top:407.3px;font-size:29.5px;color:#56a55a">0</div>
<div class="cell" style="left:993px;top:407.3px;font-size:29.5px;color:#cb2a1d">+1</div>
<div class="cell" style="left:1057px;top:407.3px;font-size:29.5px;color:#cb2a1d">+1</div>
<div class="cell" style="left:1121px;top:407.3px;font-size:29.5px;letter-spacing:-0.3px;color:#cb2a1d">+0.8</div>
<div class="cell" style="left:1185px;top:407.3px;font-size:29.5px;color:#d8862b">-0.2</div>
<div class="cell" style="left:1249px;top:407.3px;font-size:29.5px;color:#d8862b">-0.2</div>
<div class="cell" style="left:1313px;top:407.3px;font-size:29.5px;color:#cb2a1d">+1</div>
<div class="cell" style="left:1377px;top:407.3px;font-size:29.5px;color:#cb2a1d">+1</div>
<div class="cell" style="left:1441px;top:407.3px;font-size:29.5px;color:#d8862b">-1</div>
<div class="cell" style="left:1505px;top:407.3px;font-size:29.5px;color:#56a55a">0</div>
<div class="cell" style="left:1569px;top:407.3px;font-size:29.5px;color:#56a55a">0</div>
<div class="cell" style="left:1633px;top:407.3px;font-size:29.5px;color:#56a55a">0</div>
<div class="cell" style="left:1697px;top:407.3px;font-size:29.5px;color:#56a55a">0</div>
<div class="cell" style="left:1761px;top:407.3px;font-size:29.5px;color:#56a55a">0</div>
<div class="abs" style="left:952px;top:454px;width:64px;height:40px;border-radius:6px;background:#d4dfee"></div>
<svg class="abs" style="left:952px;top:454px" width="64" height="40" viewBox="0 0 64 40"><path d="M19.8 31.1 L28.2 23.1" fill="none" stroke="#355a85" stroke-width="2" stroke-linecap="round"/><path d="M22.8 16.4 C26 14 29 14.4 31.3 15.6 L34.3 8.3 Q35.6 6.3 37.4 8 L43.9 14.2 Q45.4 16 43.2 16.9 L35 19.7 C36.6 23 36.3 25.6 34.5 28 Z" fill="none" stroke="#355a85" stroke-width="2" stroke-linejoin="round"/></svg>
<div class="vl" style="left:480px;top:542px;height:900px"></div>
<div class="vl" style="left:544px;top:542px;height:900px"></div>
<div class="vl" style="left:608px;top:542px;height:900px"></div>
<div class="vl" style="left:672px;top:542px;height:900px"></div>
<div class="vl" style="left:736px;top:542px;height:900px"></div>
<div class="vl" style="left:800px;top:542px;height:900px"></div>
<div class="vl" style="left:864px;top:542px;height:900px"></div>
<div class="vl" style="left:928px;top:542px;height:900px"></div>
<div class="vl" style="left:992px;top:542px;height:900px"></div>
<div class="vl" style="left:1056px;top:542px;height:900px"></div>
<div class="vl" style="left:1120px;top:542px;height:900px"></div>
<div class="vl" style="left:1184px;top:542px;height:900px"></div>
<div class="vl" style="left:1248px;top:542px;height:900px"></div>
<div class="vl" style="left:1312px;top:542px;height:900px"></div>
<div class="vl" style="left:1376px;top:542px;height:900px"></div>
<div class="vl" style="left:1440px;top:542px;height:900px"></div>
<div class="vl" style="left:1504px;top:542px;height:900px"></div>
<div class="vl" style="left:1568px;top:542px;height:900px"></div>
<div class="vl" style="left:1632px;top:542px;height:900px"></div>
<div class="vl" style="left:1696px;top:542px;height:900px"></div>
<div class="vl" style="left:1760px;top:542px;height:900px"></div>
<div class="lbl" style="top:544.6px;letter-spacing:0.35px">Service</div>
<div class="cell" style="left:481px;top:546px;font-size:26px;color:#56a55a">0</div>
<div class="cell" style="left:545px;top:546px;font-size:26px;color:#56a55a">0</div>
<div class="cell" style="left:609px;top:546px;font-size:26px;color:#56a55a">0</div>
<div class="cell" style="left:673px;top:546px;font-size:26px;color:#56a55a">0</div>
<div class="cell" style="left:737px;top:546px;font-size:26px;color:#56a55a">0</div>
<div class="cell" style="left:801px;top:546px;font-size:26px;color:#56a55a">0</div>
<div class="cell" style="left:865px;top:546px;font-size:26px;color:#56a55a">0</div>
<div class="cell" style="left:929px;top:546px;font-size:26px;color:#56a55a">0</div>
<div class="cell" style="left:993px;top:546px;font-size:26px;color:#cb2a1d">+1</div>
<div class="cell" style="left:1057px;top:546px;font-size:26px;color:#cb2a1d">+1</div>
<div class="cell" style="left:1121px;top:546px;font-size:26px;letter-spacing:0.3px;color:#cb2a1d">+0.8</div>
<div class="cell" style="left:1185px;top:546px;font-size:26px;letter-spacing:0.7px;color:#d8862b">-0.3</div>
<div class="cell" style="left:1249px;top:546px;font-size:26px;letter-spacing:0.7px;color:#d8862b">-0.3</div>
<div class="cell" style="left:1313px;top:546px;font-size:26px;color:#cb2a1d">+1</div>
<div class="cell" style="left:1377px;top:546px;font-size:26px;color:#cb2a1d">+1</div>
<div class="cell" style="left:1441px;top:546px;font-size:26px;color:#56a55a">0</div>
<div class="cell" style="left:1505px;top:546px;font-size:26px;color:#56a55a">0</div>
<div class="cell" style="left:1569px;top:546px;font-size:26px;color:#56a55a">0</div>
<div class="cell" style="left:1633px;top:546px;font-size:26px;color:#56a55a">0</div>
<div class="cell" style="left:1697px;top:546px;font-size:26px;color:#56a55a">0</div>
<div class="cell" style="left:1761px;top:546px;font-size:26px;color:#56a55a">0</div>
<div class="lbl" style="top:992.5999999999999px;letter-spacing:0.7px">Kitchen</div>
<div class="cell" style="left:481px;top:994px;font-size:26px;color:#56a55a">0</div>
<div class="cell" style="left:545px;top:994px;font-size:26px;color:#d8862b">-1</div>
<div class="cell" style="left:609px;top:994px;font-size:26px;color:#56a55a">0</div>
<div class="cell" style="left:673px;top:994px;font-size:26px;color:#56a55a">0</div>
<div class="cell" style="left:737px;top:994px;font-size:26px;color:#56a55a">0</div>
<div class="cell" style="left:801px;top:994px;font-size:26px;color:#56a55a">0</div>
<div class="cell" style="left:865px;top:994px;font-size:26px;color:#56a55a">0</div>
<div class="cell" style="left:929px;top:994px;font-size:26px;color:#56a55a">0</div>
<div class="cell" style="left:993px;top:994px;font-size:26px;color:#56a55a">0</div>
<div class="cell" style="left:1057px;top:994px;font-size:26px;color:#56a55a">0</div>
<div class="cell" style="left:1121px;top:994px;font-size:26px;color:#56a55a">0</div>
<div class="cell" style="left:1185px;top:994px;font-size:26px;color:#56a55a">0</div>
<div class="cell" style="left:1249px;top:994px;font-size:26px;color:#56a55a">0</div>
<div class="cell" style="left:1313px;top:994px;font-size:26px;color:#56a55a">0</div>
<div class="cell" style="left:1377px;top:994px;font-size:26px;color:#56a55a">0</div>
<div class="cell" style="left:1441px;top:994px;font-size:26px;color:#56a55a">0</div>
<div class="cell" style="left:1505px;top:994px;font-size:26px;color:#56a55a">0</div>
<div class="cell" style="left:1569px;top:994px;font-size:26px;color:#56a55a">0</div>
<div class="cell" style="left:1633px;top:994px;font-size:26px;color:#56a55a">0</div>
<div class="cell" style="left:1697px;top:994px;font-size:26px;color:#56a55a">0</div>
<div class="cell" style="left:1761px;top:994px;font-size:26px;color:#56a55a">0</div>
<div class="lbl" style="top:1312.6px;letter-spacing:0.5px">Bar</div>
<div class="cell" style="left:481px;top:1314px;font-size:26px;color:#56a55a">0</div>
<div class="cell" style="left:545px;top:1314px;font-size:26px;color:#56a55a">0</div>
<div class="cell" style="left:609px;top:1314px;font-size:26px;color:#56a55a">0</div>
<div class="cell" style="left:673px;top:1314px;font-size:26px;color:#56a55a">0</div>
<div class="cell" style="left:737px;top:1314px;font-size:26px;color:#56a55a">0</div>
<div class="cell" style="left:801px;top:1314px;font-size:26px;color:#56a55a">0</div>
<div class="cell" style="left:865px;top:1314px;font-size:26px;color:#56a55a">0</div>
<div class="cell" style="left:929px;top:1314px;font-size:26px;color:#56a55a">0</div>
<div class="cell" style="left:993px;top:1314px;font-size:26px;color:#56a55a">0</div>
<div class="cell" style="left:1057px;top:1314px;font-size:26px;color:#56a55a">0</div>
<div class="cell" style="left:1121px;top:1314px;font-size:26px;color:#56a55a">0</div>
<div class="cell" style="left:1185px;top:1314px;font-size:26px;color:#56a55a">0</div>
<div class="cell" style="left:1249px;top:1314px;font-size:26px;color:#56a55a">0</div>
<div class="cell" style="left:1313px;top:1314px;font-size:26px;color:#56a55a">0</div>
<div class="cell" style="left:1377px;top:1314px;font-size:26px;color:#56a55a">0</div>
<div class="cell" style="left:1441px;top:1314px;font-size:26px;color:#56a55a">0</div>
<div class="cell" style="left:1505px;top:1314px;font-size:26px;color:#56a55a">0</div>
<div class="cell" style="left:1569px;top:1314px;font-size:26px;color:#56a55a">0</div>
<div class="cell" style="left:1633px;top:1314px;font-size:26px;color:#56a55a">0</div>
<div class="cell" style="left:1697px;top:1314px;font-size:26px;color:#56a55a">0</div>
<div class="cell" style="left:1761px;top:1314px;font-size:26px;color:#56a55a">0</div>
<div class="slot" style="left:617.3px;top:606px"></div>
<div class="slot" style="left:681.3px;top:606px"></div>
<div class="slot" style="left:745.3px;top:606px"></div>
<div class="slot" style="left:809.3px;top:606px"></div>
<div class="slot" style="left:873.3px;top:606px"></div>
<div class="slot" style="left:937.3px;top:606px"></div>
<div class="bar" style="left:608px;top:610px;width:384px"><div class="av" style="left:6px;top:4px;width:32px;height:32px"><svg viewBox="0 0 64 64" width="100%" height="100%" preserveAspectRatio="none"><rect width="64" height="64" fill="#384444"/><g filter="url(#bl3)"><rect x="-4" y="-4" width="72" height="72" fill="#344040"/><circle cx="44" cy="30" r="22" fill="#4a5252"/><path d="M4 58 C14 48 24 46 34 48 C46 46 54 50 62 58 V68 H2Z" fill="#0d0e0e"/><path d="M24 44 h16 v12 h-16Z" fill="#b78c72"/><ellipse cx="33" cy="34" rx="11.5" ry="15.5" fill="#d6a588"/><path d="M22 34 C20 44 26 52 32 52 C28 46 26 38 26 30Z" fill="#8c6a55"/><path d="M16 26 C14 12 24 4 36 6 C46 8 50 16 48 28 C44 20 38 18 30 20 C24 22 22 28 22 34Z" fill="#4a3c30"/><path d="M26 32 h6 M38 32 h5" stroke="#4a3a36" stroke-width="2"/><path d="M29 46 h9" stroke="#8a5a4c" stroke-width="2"/></g></svg></div><div class="nm" style="letter-spacing:-0.14px">Hauke Schultze<span>6 h</span></div></div>
<div class="slot" style="left:1001.3px;top:606px"></div>
<div class="slot" style="left:1065.3px;top:606px"></div>
<div class="slot" style="left:1129.3px;top:606px"></div>
<div class="slot" style="left:1193.3px;top:606px"></div>
<div class="slot" style="left:1257.3px;top:606px"></div>
<div class="slot" style="left:1321.3px;top:606px"></div>
<div class="slot" style="left:1385.3px;top:606px"></div>
<div class="slot" style="left:1449.3000000000002px;top:606px"></div>
<div class="bar" style="left:992px;top:610px;width:512px"><div class="av" style="left:6px;top:4px;width:32px;height:32px"><svg viewBox="0 0 32 32" width="100%" height="100%"><rect width="32" height="32" fill="#47969a"/><circle cx="16" cy="11.4" r="4.3" fill="none" stroke="#fff" stroke-width="1.5"/><path d="M8.8 25.4 V21.6 a5.4 5.4 0 0 1 5.4 -5.4 h3.6 a5.4 5.4 0 0 1 5.4 5.4 V25.4 Z" fill="none" stroke="#fff" stroke-width="1.5"/></svg></div><div class="nm" style="letter-spacing:-0.08px">John Doe<span>8 h</span></div></div>
<div class="notch" style="left:1232px;top:610px"></div>
<div class="slot" style="left:681.3px;top:670px"></div>
<div class="slot" style="left:745.3px;top:670px"></div>
<div class="slot" style="left:809.3px;top:670px"></div>
<div class="slot" style="left:873.3px;top:670px"></div>
<div class="slot" style="left:937.3px;top:670px"></div>
<div class="slot" style="left:1001.3px;top:670px"></div>
<div class="bar" style="left:672px;top:674px;width:384px"><div class="av" style="left:6px;top:4px;width:32px;height:32px"><svg viewBox="0 0 64 64" width="100%" height="100%" preserveAspectRatio="none"><rect width="64" height="64" fill="#e9edf5"/><g filter="url(#bl3)"><rect x="-4" y="-4" width="72" height="72" fill="#e8edf6"/><path d="M-4 28 H68 V40 H-4Z" fill="#d2dae6"/><path d="M12 50 C8 20 22 2 36 2 C50 2 56 22 58 54 L50 64 H14Z" fill="#2a2232"/><path d="M15 28 C16 14 28 10 38 14 C46 20 46 36 42 44 C38 52 28 54 22 48 C16 42 14 36 15 28Z" fill="#e6bfa9"/><path d="M8 58 C16 50 22 52 26 56 C34 54 42 48 46 42 L60 58 L54 68 H8Z" fill="#8c7349"/><path d="M22 40 C26 45 34 44 38 38 C34 41 26 42 22 40Z" fill="#fff" stroke="#c47d7d" stroke-width="1.6"/><path d="M18 25 h7 M31 27 h7" stroke="#3a2a30" stroke-width="2.4"/><path d="M20 32 C24 36 28 36 30 33" stroke="#d9a692" stroke-width="2" fill="none"/></g></svg></div><div class="nm" style="letter-spacing:-0.04px">Delia Hallmann<span>6 h</span></div></div>
<div class="slot" style="left:1129.3px;top:670px"></div>
<div class="slot" style="left:1193.3px;top:670px"></div>
<div class="slot" style="left:1257.3px;top:670px"></div>
<div class="slot" style="left:1321.3px;top:670px"></div>
<div class="slot" style="left:1385.3px;top:670px"></div>
<div class="slot" style="left:1449.3000000000002px;top:670px"></div>
<div class="bar" style="left:1136px;top:674px;width:368px"><div class="av" style="left:6px;top:4px;width:32px;height:32px"><svg viewBox="0 0 64 64" width="100%" height="100%" preserveAspectRatio="none"><rect width="64" height="64" fill="#efd9bc"/><g filter="url(#bl3)"><rect x="-4" y="-4" width="72" height="72" fill="#f3e0c6"/><rect x="38" y="24" width="30" height="44" fill="#b08655"/><rect x="40" y="18" width="10" height="16" fill="#e2cfb8"/><rect x="50" y="22" width="8" height="14" fill="#d8c4a8"/><path d="M42 40 L68 30 V68 H50Z" fill="#7a5a3a"/><path d="M4 20 C10 4 24 0 34 2 C42 8 44 24 46 36 C50 48 52 56 46 68 H8 C2 50 0 34 4 20Z" fill="#5a3326"/><path d="M8 18 C14 10 22 12 28 20 C34 28 34 36 32 42 C28 50 20 52 14 46 C8 40 6 28 8 18Z" fill="#e9b98d"/><path d="M20 46 L30 46 L33 68 H17Z" fill="#e5b081"/><path d="M14 10 C22 6 30 8 36 18 C40 26 40 30 38 34 C34 26 26 18 14 10Z" fill="#8c5a3a"/><path d="M2 40 C6 52 12 60 20 68 H4 C2 56 0 48 2 40Z" fill="#20182a"/><path d="M30 44 C34 50 36 58 34 68 H50 C50 54 44 46 30 44Z" fill="#241a2c"/><path d="M11 25 h7 M24 26 h6" stroke="#3a2a2a" stroke-width="2.6"/><path d="M14 38 Q20 41.5 26 37" stroke="#b5604a" stroke-width="2.6" fill="none"/></g></svg></div><div class="nm" style="letter-spacing:-0.1px">Martin Manager<span>5.75 h</span></div></div>
<div class="slot" style="left:745.3px;top:734px"></div>
<div class="slot" style="left:809.3px;top:734px"></div>
<div class="slot" style="left:873.3px;top:734px"></div>
<div class="slot" style="left:937.3px;top:734px"></div>
<div class="slot" style="left:1001.3px;top:734px"></div>
<div class="slot" style="left:1065.3px;top:734px"></div>
<div class="bar" style="left:736px;top:738px;width:384px"><div class="av" style="left:6px;top:4px;width:32px;height:32px"><svg viewBox="0 0 64 64" width="100%" height="100%" preserveAspectRatio="none"><rect width="64" height="64" fill="#e9eaec"/><g filter="url(#bl3)"><rect x="-4" y="-4" width="72" height="38" fill="#eeefef"/><rect x="-4" y="34" width="72" height="34" fill="#cfd0d3"/><rect x="0" y="26" width="7" height="6" fill="#e0962a"/><path d="M7 32 C8 24 18 24 20 32Z M42 32 C44 24 54 24 56 32Z" fill="#26262c"/><rect x="8" y="32" width="1.6" height="10" fill="#555"/><rect x="18" y="32" width="1.6" height="10" fill="#555"/><rect x="44" y="32" width="1.6" height="10" fill="#555"/><rect x="54" y="32" width="1.6" height="10" fill="#555"/><path d="M12 64 C16 52 24 50 32 50 C40 50 48 52 52 64 V68 H12Z" fill="#b9babd"/><rect x="26" y="44" width="12" height="10" fill="#c99f86"/><ellipse cx="32" cy="33" rx="9.5" ry="12.5" fill="#dbb198"/><path d="M22 28 C22 16 28 13 33 13 C40 13 43 18 42 28 C40 22 36 21 32 21 C27 21 24 23 22 28Z" fill="#5d4b3f"/><path d="M26 31 h5 M34 31 h5" stroke="#4a3a36" stroke-width="2"/><path d="M28 43 h8" stroke="#6a4a40" stroke-width="2.4"/></g></svg></div><div class="nm" style="letter-spacing:-0.33px">Thore Sander<span>6 h</span></div></div>
<div class="slot d" style="left:1321.3px;top:734px"></div>
<div class="slot" style="left:1385.3px;top:734px"></div>
<div class="slot" style="left:1449.3000000000002px;top:734px"></div>
<div class="slot" style="left:1513.3000000000002px;top:734px"></div>
<div class="slot" style="left:1577.3000000000002px;top:734px"></div>
<div class="bar" style="left:1312px;top:738px;width:320px"><div class="av" style="left:6px;top:4px;width:32px;height:32px"><svg viewBox="0 0 64 64" width="100%" height="100%" preserveAspectRatio="none"><rect width="64" height="64" fill="#7c9d66"/><g filter="url(#bl3)"><rect x="-4" y="-4" width="72" height="72" fill="#7a9b63"/><circle cx="12" cy="26" r="8" fill="#cfe0d2"/><circle cx="8" cy="48" r="7" fill="#9dbd88"/><circle cx="56" cy="14" r="6" fill="#dfeadf"/><circle cx="58" cy="44" r="6" fill="#5f8a50"/><path d="M28 56 L52 50 L58 68 H26Z" fill="#1d2430"/><path d="M28 66 L34 58 L40 66Z" fill="#a9b8d6"/><path d="M32 50 L50 46 L48 62 L36 64Z" fill="#d8ab92"/><ellipse cx="38" cy="35" rx="16" ry="21" fill="#e4b9a0"/><path d="M20 30 C18 8 34 0 46 4 C56 8 58 20 56 32 C52 22 48 16 40 15 C30 14 24 18 22 34Z" fill="#3a3029"/><path d="M25 32 h9 M42 31 h9" stroke="#4a3a30" stroke-width="2.6"/><path d="M32 48 Q38 50 44 47" stroke="#b36a66" stroke-width="2.6" fill="none"/></g></svg></div><div class="nm" style="letter-spacing:-0.14px">Dennis Steinert<span>5 h</span></div></div>
<div class="slot" style="left:809.3px;top:798px"></div>
<div class="slot" style="left:873.3px;top:798px"></div>
<div class="slot" style="left:937.3px;top:798px"></div>
<div class="slot" style="left:1001.3px;top:798px"></div>
<div class="slot" style="left:1065.3px;top:798px"></div>
<div class="slot" style="left:1129.3px;top:798px"></div>
<div class="bar" style="left:800px;top:802px;width:384px"><div class="av" style="left:6px;top:4px;width:32px;height:32px"><svg viewBox="0 0 64 64" width="100%" height="100%" preserveAspectRatio="none"><rect width="64" height="64" fill="#2c5228"/><g filter="url(#bl3)"><rect x="-4" y="-4" width="72" height="72" fill="#2f5a2b"/><path d="M-4 22 L12 30 L8 40 L-4 38Z M68 20 L54 28 L56 40 L68 36Z" fill="#4a8a3e"/><path d="M-4 36 C6 30 12 34 16 42 L48 42 C52 34 58 32 68 34 V68 H-4Z" fill="#1d2763"/><path d="M4 46 C10 42 14 48 18 60 L6 64Z" fill="#2f47a0"/><path d="M12 32 C6 6 22 -2 33 -2 C48 -2 58 6 53 32 L50 40 C46 52 40 58 33 58 C25 58 18 52 15 42Z" fill="#1b0c15"/><path d="M18 18 C24 11 42 11 48 18 L49 35 C46 46 40 53 33 53 C26 53 20 46 17 35Z" fill="#d2ab86"/><ellipse cx="33" cy="34" rx="8" ry="11" fill="#e2c09a"/><path d="M15 34 C17 51 25 58 33 58 C41 58 49 51 51 34 C47 45 41 50 33 50 C25 50 19 45 15 34Z" fill="#2a1a22"/><path d="M18 22.5 L28.5 25.5 M48 22.5 L37.5 25.5" stroke="#1e0f18" stroke-width="2.8"/><path d="M21 29.5 h7 M38 29.5 h7" stroke="#3a2a38" stroke-width="3.2"/><path d="M31 30 L30 40 h5" stroke="#c29c7a" stroke-width="2" fill="none"/><path d="M25 45.5 H41" stroke="#3a222a" stroke-width="2.4"/><path d="M28 49.5 H38" stroke="#c88a86" stroke-width="2.4"/></g></svg></div><div class="nm" style="letter-spacing:-0.17px">Kian Brix<span>6 h</span></div></div>
<div class="slot d" style="left:1385.3px;top:798px"></div>
<div class="slot" style="left:1449.3000000000002px;top:798px"></div>
<div class="slot" style="left:1513.3000000000002px;top:798px"></div>
<div class="bar" style="left:1376px;top:802px;width:192px"><div class="av" style="left:6px;top:4px;width:32px;height:32px"><svg viewBox="0 0 64 64" width="100%" height="100%" preserveAspectRatio="none"><rect width="64" height="64" fill="#9a9892"/><g filter="url(#bl3)"><rect x="-4" y="-4" width="40" height="72" fill="#e6e6e4"/><rect x="36" y="-4" width="32" height="72" fill="#3c3b37"/><rect x="0" y="18" width="6" height="30" fill="#1a1a1a"/><rect x="6" y="30" width="8" height="8" fill="#c03a40"/><rect x="6" y="38" width="8" height="12" fill="#8fc070"/><rect x="50" y="30" width="14" height="9" fill="#b8262a"/><rect x="52" y="40" width="12" height="16" fill="#5aa845"/><path d="M4 62 C10 48 22 44 33 44 C46 44 54 48 60 62 V68 H4Z" fill="#ece9f1"/><rect x="28" y="38" width="11" height="9" fill="#c99f86"/><ellipse cx="33" cy="29" rx="9.5" ry="12.5" fill="#dcae94"/><path d="M22 26 C21 12 28 8 34 8 C42 8 45 14 43 24 C40 18 36 17 32 18 C27 19 24 22 23 30Z" fill="#2e2621"/><path d="M27 28 h5 M36 27 h5" stroke="#3a2a26" stroke-width="2"/><path d="M30 37 Q34 39 38 36" stroke="#8a5a50" stroke-width="2" fill="none"/></g></svg></div><div class="nm" style="letter-spacing:-0.2px">Klaas Brinkmann<span>3 h</span></div></div>
<div class="slot" style="left:809.3px;top:862px"></div>
<div class="slot" style="left:873.3px;top:862px"></div>
<div class="slot" style="left:937.3px;top:862px"></div>
<div class="slot d" style="left:1001.3px;top:862px"></div>
<div class="slot d" style="left:1065.3px;top:862px"></div>
<div class="slot d" style="left:1129.3px;top:862px"></div>
<div class="bar" style="left:800px;top:866px;width:384px"><div class="av" style="left:6px;top:4px;width:32px;height:32px"><svg viewBox="0 0 32 32" width="100%" height="100%"><rect width="32" height="32" fill="#47969a"/><circle cx="16" cy="11.4" r="4.3" fill="none" stroke="#fff" stroke-width="1.5"/><path d="M8.8 25.4 V21.6 a5.4 5.4 0 0 1 5.4 -5.4 h3.6 a5.4 5.4 0 0 1 5.4 5.4 V25.4 Z" fill="none" stroke="#fff" stroke-width="1.5"/></svg></div><div class="nm" style="letter-spacing:-0.2px">Katarina Faller<span>6 h</span></div></div>
<div class="slot p" style="left:553.3px;top:1054px"></div>
<div class="slot" style="left:617.3px;top:1054px"></div>
<div class="slot" style="left:681.3px;top:1054px"></div>
<div class="slot" style="left:745.3px;top:1054px"></div>
<div class="slot" style="left:809.3px;top:1054px"></div>
<div class="slot" style="left:873.3px;top:1054px"></div>
<div class="slot" style="left:937.3px;top:1054px"></div>
<div class="bar" style="left:608px;top:1058px;width:384px"><div class="av" style="left:6px;top:4px;width:32px;height:32px"><svg viewBox="0 0 64 64" width="100%" height="100%" preserveAspectRatio="none"><rect width="64" height="64" fill="#e3ddd8"/><g filter="url(#bl3)"><rect x="-4" y="-4" width="72" height="72" fill="#efdccb"/><rect x="-4" y="10" width="22" height="30" fill="#e8ece8"/><rect x="-4" y="14" width="8" height="26" fill="#8c9a38"/><rect x="8" y="10" width="12" height="4" fill="#6a7a30"/><path d="M-4 36 C8 30 16 36 20 44 L30 68 H-4Z" fill="#b9bad6"/><rect x="0" y="38" width="5" height="14" fill="#3a2430"/><path d="M44 8 C58 14 62 34 56 54 C52 62 46 66 42 68 L44 40Z" fill="#dfa274"/><path d="M22 6 C30 -2 48 0 54 14 C58 30 52 48 48 66 H22 C26 44 20 24 22 6Z" fill="#f2e0cf"/><ellipse cx="39" cy="27" rx="10" ry="14" fill="#f1d0ca"/><path d="M26 4 C34 0 48 2 52 14 L50 20 C44 14 34 14 28 20Z" fill="#f0dcc2"/><path d="M32 22 h6 M44 24 h6" stroke="#5a5a78" stroke-width="2.6"/><path d="M35 36 h9" stroke="#c98a96" stroke-width="2.4"/><path d="M34 48 L44 50 L42 68 H32Z" fill="#b7b6cf"/></g></svg></div><div class="nm" style="letter-spacing:-0.45px">Rosa Stang<span>6 h</span></div></div>
<div class="slot" style="left:1001.3px;top:1054px"></div>
<div class="slot" style="left:1065.3px;top:1054px"></div>
<div class="slot" style="left:1129.3px;top:1054px"></div>
<div class="slot" style="left:1193.3px;top:1054px"></div>
<div class="slot" style="left:1257.3px;top:1054px"></div>
<div class="slot" style="left:1321.3px;top:1054px"></div>
<div class="slot" style="left:1385.3px;top:1054px"></div>
<div class="slot" style="left:1449.3000000000002px;top:1054px"></div>
<div class="slot" style="left:1513.3000000000002px;top:1054px"></div>
<div class="bar" style="left:992px;top:1058px;width:576px"><div class="av" style="left:6px;top:4px;width:32px;height:32px"><svg viewBox="0 0 32 32" width="100%" height="100%"><rect width="32" height="32" fill="#47969a"/><circle cx="16" cy="11.4" r="4.3" fill="none" stroke="#fff" stroke-width="1.5"/><path d="M8.8 25.4 V21.6 a5.4 5.4 0 0 1 5.4 -5.4 h3.6 a5.4 5.4 0 0 1 5.4 5.4 V25.4 Z" fill="none" stroke="#fff" stroke-width="1.5"/></svg></div><div class="nm" style="letter-spacing:-0.22px">Saphira Schöckel<span>9 h</span></div></div>
<div class="notch" style="left:1152px;top:1058px"></div>
<div class="slot" style="left:681.3px;top:1118px"></div>
<div class="slot" style="left:745.3px;top:1118px"></div>
<div class="slot" style="left:809.3px;top:1118px"></div>
<div class="slot" style="left:873.3px;top:1118px"></div>
<div class="slot" style="left:937.3px;top:1118px"></div>
<div class="slot" style="left:1001.3px;top:1118px"></div>
<div class="bar" style="left:672px;top:1122px;width:384px"><div class="av" style="left:6px;top:4px;width:32px;height:32px"><svg viewBox="0 0 64 64" width="100%" height="100%" preserveAspectRatio="none"><rect width="64" height="64" fill="#dcdcdd"/><g filter="url(#bl3)"><rect x="-4" y="-4" width="72" height="72" fill="#d6d6d8"/><circle cx="20" cy="30" r="20" fill="#e8e8ea"/><path d="M4 56 C10 44 22 42 30 46 L40 68 H2Z" fill="#8f8a88"/><path d="M40 50 C50 46 58 50 62 58 V68 H40Z" fill="#9a9593"/><path d="M26 46 L46 50 L42 68 H30Z" fill="#eec2a3"/><ellipse cx="38" cy="35" rx="14" ry="18" fill="#d8a88e"/><path d="M22 32 C18 10 32 2 42 4 C54 6 56 18 52 28 C48 20 42 17 36 18 C28 19 26 24 25 36Z" fill="#221c1a"/><path d="M30 44 C34 40 44 40 48 44 C48 52 42 56 38 56 C34 56 30 52 30 44Z" fill="#8a6e62"/><ellipse cx="39" cy="46" rx="5" ry="2.4" fill="#d79a8a"/><path d="M27 30 h9 M41 30 h9" stroke="#2a2220" stroke-width="2.8"/></g></svg></div><div class="nm" style="letter-spacing:-0.49px">Yannic De<span>6 h</span></div></div>
<div class="slot" style="left:1129.3px;top:1118px"></div>
<div class="slot" style="left:1193.3px;top:1118px"></div>
<div class="slot" style="left:1257.3px;top:1118px"></div>
<div class="slot" style="left:1321.3px;top:1118px"></div>
<div class="slot" style="left:1385.3px;top:1118px"></div>
<div class="slot" style="left:1449.3000000000002px;top:1118px"></div>
<div class="bar" style="left:1152px;top:1122px;width:352px"><div class="av" style="left:6px;top:4px;width:32px;height:32px"><svg viewBox="0 0 64 64" width="100%" height="100%" preserveAspectRatio="none"><rect width="64" height="64" fill="#d8d8d8"/><g filter="url(#bl3)"><rect x="-4" y="-4" width="72" height="72" fill="#d9d9d9"/><path d="M12 26 L38 22 L42 30 L58 28 L64 68 H28 L30 44 Z" fill="#8e8c85"/><path d="M20 20 L38 18 L38 24 L22 26Z" fill="#b9a46a"/><path d="M42 30 L54 30 L54 68 H42Z" fill="#d3d7df"/><path d="M46 36 L52 36 L50 52 L46 50Z" fill="#4a5568"/><path d="M40 10 C40 2 52 0 56 6 C58 12 56 20 54 26 C50 30 44 28 42 22Z" fill="#d9b096"/><path d="M38 10 C38 0 52 -2 56 6 C52 4 46 5 44 10 L42 16Z" fill="#7a5836"/><path d="M42 15 h14" stroke="#4a4a4a" stroke-width="1.6"/></g></svg></div><div class="nm" style="letter-spacing:-0.01px">Bernd Helpling<span>5.5 h</span></div></div>
<div class="slot" style="left:809.3px;top:1182px"></div>
<div class="slot" style="left:873.3px;top:1182px"></div>
<div class="slot" style="left:937.3px;top:1182px"></div>
<div class="slot" style="left:1001.3px;top:1182px"></div>
<div class="slot" style="left:1065.3px;top:1182px"></div>
<div class="slot d" style="left:1129.3px;top:1182px"></div>
<div class="bar" style="left:800px;top:1186px;width:384px"><div class="av" style="left:6px;top:4px;width:32px;height:32px"><svg viewBox="0 0 64 64" width="100%" height="100%" preserveAspectRatio="none"><rect width="64" height="64" fill="#f1ecd8"/><g filter="url(#bl3)"><rect x="-4" y="-4" width="72" height="72" fill="#f3efdb"/><path d="M-4 14 C6 8 18 10 22 14 L22 52 L-4 56Z" fill="#a8333b"/><path d="M14 20 C14 4 30 -2 42 2 C54 8 58 22 54 38 C52 50 46 56 40 60 L20 48Z" fill="#c9a77c"/><path d="M30 6 L36 4 L38 12 L32 14Z M46 14 L52 12 L54 28 L50 30Z M48 36 L54 36 L52 46 L48 46Z" fill="#5a432f"/><ellipse cx="29" cy="33" rx="10.5" ry="14" fill="#f2d5b5"/><path d="M4 50 C14 40 24 44 34 50 C42 52 50 54 52 62 V68 H4Z" fill="#3a2320"/><path d="M24 52 C32 48 44 52 46 62 L40 68 H26Z" fill="#8a5a3c"/><path d="M23 30 h5 M32 31 h6" stroke="#5a4030" stroke-width="2.4"/><path d="M25 41 Q29 43 33 41" stroke="#c07a6a" stroke-width="2.4" fill="none"/></g></svg></div><div class="nm" style="letter-spacing:-0.23px">Jasmine Gutschank<span>6 h</span></div></div>
<div class="slot" style="left:1449.3000000000002px;top:1182px"></div>
<div class="slot" style="left:1513.3000000000002px;top:1182px"></div>
<div class="slot" style="left:1577.3000000000002px;top:1182px"></div>
<div class="bar" style="left:1440px;top:1186px;width:192px"><div class="av" style="left:6px;top:4px;width:32px;height:32px"><svg viewBox="0 0 64 64" width="100%" height="100%" preserveAspectRatio="none"><rect width="64" height="64" fill="#3a2c1e"/><g filter="url(#bl3)"><rect x="-4" y="-4" width="72" height="72" fill="#3b2d1f"/><circle cx="16" cy="6" r="2.6" fill="#c8482c"/><circle cx="24" cy="4" r="2.6" fill="#c8482c"/><circle cx="32" cy="3" r="2.6" fill="#c8482c"/><circle cx="40" cy="4" r="2.6" fill="#c8482c"/><circle cx="48" cy="6" r="2.6" fill="#c8482c"/><circle cx="14" cy="14" r="2.6" fill="#c8482c"/><circle cx="20" cy="13" r="2.6" fill="#c8482c"/><circle cx="44" cy="13" r="2.6" fill="#c8482c"/><circle cx="50" cy="14" r="2.6" fill="#c8482c"/><circle cx="12" cy="30" r="2.6" fill="#c8482c"/><circle cx="54" cy="28" r="2.6" fill="#c8482c"/><rect x="18" y="22" width="4" height="20" fill="#5a6aa0"/><rect x="44" y="22" width="4" height="20" fill="#7a7ab0"/><rect x="40" y="30" width="4" height="6" fill="#c8962c"/><path d="M0 52 C8 42 20 40 32 40 C44 40 56 42 64 52 V68 H0Z" fill="#141b2b"/><path d="M25 38 L39 38 L36 54 L32 58 L28 54Z" fill="#f2f0ea"/><path d="M30 44 L35 44 L36 68 H29Z" fill="#d8a544"/><ellipse cx="32" cy="27" rx="9.5" ry="12.5" fill="#d3a285"/><path d="M22 24 C22 10 28 7 33 7 C40 7 43 12 42 24 C40 17 36 15 32 15 C27 15 24 18 22 24Z" fill="#8c8479"/><path d="M26 27 h5 M34 27 h5" stroke="#5a4438" stroke-width="2"/><path d="M28 36 h8" stroke="#9a625a" stroke-width="2"/></g></svg></div><div class="nm" style="letter-spacing:-0.13px">Till Scherer<span>3 h</span></div></div>
</div>
</div></body></html>
